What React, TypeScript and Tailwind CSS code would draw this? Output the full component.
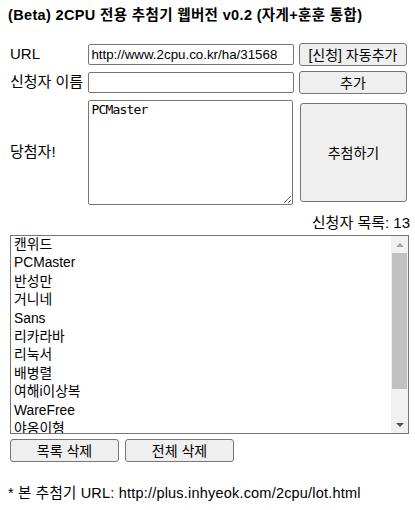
import { useState } from "react";

const applicants = [
  "캔위드",
  "PCMaster",
  "반성만",
  "거니네",
  "Sans",
  "리카라바",
  "리눅서",
  "배병렬",
  "여해i이상복",
  "WareFree",
  "야옹이형",
  "돌쇠",
  "하늘바라기",
];

const font = "font-['Liberation_Sans','Noto_Sans_CJK_KR',sans-serif]";
const btn =
  "bg-[#efefef] border border-[#767676] rounded-[3px] text-[14px] leading-none text-black";

export default function App() {
  const [url, setUrl] = useState("http://www.2cpu.co.kr/ha/31568");
  const [name, setName] = useState("");
  const [winner, setWinner] = useState("PCMaster");

  return (
    <div className={`${font} text-black bg-white w-[415px] h-[510px] px-[8px] overflow-hidden`}>
      <h1 className="font-bold text-[14.5px] tracking-[0.35px] leading-[18px] pt-[6px] whitespace-nowrap">
        (Beta) 2CPU 전용 추첨기 웹버전 v0.2 (자게+훈훈 통합)
      </h1>

      {/* INPUT ROWS */}
      <div className="mt-[19px] flex items-center h-[23px]">
        <span className="w-[81px] pl-[2px] text-[15px]">URL</span>
        <input
          value={url}
          onChange={(e) => setUrl(e.target.value)}
          className="w-[207px] h-[21px] border border-[#767676] rounded-[2px] px-[2px] text-[13.33px] outline-none"
        />
        <button className={`${btn} ml-[5px] w-[109px] h-[23px]`}>[신청] 자동추가</button>
      </div>

      <div className="mt-[5px] flex items-center h-[23px]">
        <span className="w-[81px] pl-[2px] text-[15px]">신청자 이름</span>
        <input
          value={name}
          onChange={(e) => setName(e.target.value)}
          className="w-[207px] h-[21px] border border-[#767676] rounded-[2px] px-[2px] text-[13.33px] outline-none"
        />
        <button className={`${btn} ml-[5px] w-[109px] h-[23px]`}>추가</button>
      </div>

      <div className="mt-[6px] flex items-center h-[105px]">
        <span className="w-[81px] pl-[2px] text-[15px]">당첨자!</span>
        <textarea
          value={winner}
          onChange={(e) => setWinner(e.target.value)}
          className="w-[206px] h-[105px] border border-[#767676] rounded-[2px] px-[2px] py-[1px] text-[13px] leading-[16px] font-['DejaVu_Sans_Mono',monospace] tracking-[-0.8px] outline-none"
        />
        <button className={`${btn} ml-[7px] w-[108px] h-[99px]`}>추첨하기</button>
      </div>

      <div className="mt-[9px] -mr-[3px] text-right text-[15px] leading-[18px]">신청자 목록: 13</div>

      {/* APPLICANT LIST */}
      <div className="mt-[3px] ml-[2px] w-[399px] h-[199px] border border-[#767676] flex">
        <div className="flex-1 overflow-hidden">
          {applicants.map((a) => (
            <div key={a} className="h-[18.4px] leading-[18.4px] px-[3px] text-[13.8px] whitespace-nowrap">
              {a}
            </div>
          ))}
        </div>
        {/* scrollbar */}
        <div className="w-[17px] bg-[#f1f1f1] flex flex-col">
          <div className="h-[17px] flex items-center justify-center">
            <div className="w-0 h-0 border-x-[4px] border-x-transparent border-b-[4px] border-b-[#a3a3a3]" />
          </div>
          <div className="h-[136px] mx-[1px] bg-[#c1c1c1]" />
          <div className="flex-1" />
          <div className="h-[17px] flex items-center justify-center">
            <div className="w-0 h-0 border-x-[4px] border-x-transparent border-t-[4px] border-t-[#505050]" />
          </div>
        </div>
      </div>

      <div className="mt-[5px] ml-[2px] flex gap-[6px]">
        <button className={`${btn} w-[109px] h-[23px]`}>목록 삭제</button>
        <button className={`${btn} w-[109px] h-[23px]`}>전체 삭제</button>
      </div>

      <p className="mt-[22px] text-[14.5px] tracking-[0.2px] leading-[18px] whitespace-nowrap">
        * 본 추첨기 URL: http://plus.inhyeok.com/2cpu/lot.html
      </p>
    </div>
  );
}
